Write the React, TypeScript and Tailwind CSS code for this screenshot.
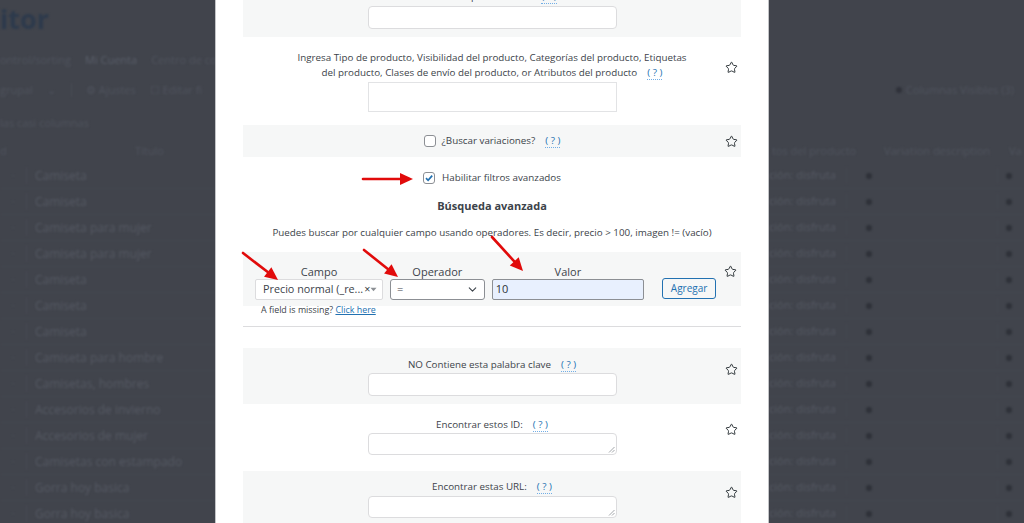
import { ChevronDown, Star } from "lucide-react";
import type { ReactNode } from "react";
import cx from "clsx";

const leftRows = [
    "Camiseta",
    "Camiseta",
    "Camiseta para mujer",
    "Camiseta para mujer",
    "Camiseta",
    "Camiseta",
    "Camiseta",
    "Camiseta para hombre",
    "Camisetas, hombres",
    "Accesorios de invierno",
    "Accesorios de mujer",
    "Camisetas con estampado",
    "Gorra hoy basica",
    "Gorra hoy basica",
];

const arrows = [
    { x1: 363, y1: 179, x2: 413, y2: 179 },
    { x1: 243, y1: 253, x2: 278, y2: 280 },
    { x1: 364, y1: 250, x2: 398, y2: 277 },
    { x1: 492, y1: 237, x2: 523, y2: 271 },
];

const Arrow = ({ x1, y1, x2, y2 }: { x1: number; y1: number; x2: number; y2: number }) => {
    const len = Math.hypot(x2 - x1, y2 - y1);
    const ux = (x2 - x1) / len;
    const uy = (y2 - y1) / len;
    const bx = x2 - ux * 13;
    const by = y2 - uy * 13;
    const px = -uy * 6;
    const py = ux * 6;
    return (
        <g>
            <line x1={x1} y1={y1} x2={bx} y2={by} stroke="#e10b0b" strokeWidth="2.6" strokeLinecap="round" />
            <polygon points={`${x2},${y2} ${bx + px},${by + py} ${bx - px},${by - py}`} fill="#e10b0b" />
        </g>
    );
};

const Help = () => (
    <span className="ml-[10px] inline-block border-b border-dotted border-[#72aee6] leading-[12px] text-[#2271b1]">
        ( ? )
    </span>
);

const StarIcon = () => <Star size={13} strokeWidth={1.8} className="text-[#2c3338]" />;

const Row = ({
    gray,
    starPad,
    noStar,
    className,
    children,
}: {
    gray?: boolean;
    starPad?: string;
    noStar?: boolean;
    className?: string;
    children: ReactNode;
}) => (
    <div className={cx("flex", gray ? "bg-[#f6f7f7]" : "bg-white")}>
        <div className="w-[20px] shrink-0" />
        <div className={cx("flex flex-1 flex-col items-center", className)}>{children}</div>
        <div className={cx("flex w-[20px] shrink-0 justify-center", starPad)}>{!noStar && <StarIcon />}</div>
    </div>
);

const TextBox = ({ h, area }: { h: string; area?: boolean }) => (
    <div className={cx("relative w-[249px] rounded-[4px] border border-[#dcdcde] bg-white", h)}>
        {area && (
            <svg className="absolute bottom-[1px] right-[1px]" width="7" height="7" viewBox="0 0 7 7">
                <path d="M6.5 1 L1 6.5 M6.5 4 L4 6.5" stroke="#8c8f94" strokeWidth="0.8" />
            </svg>
        )}
    </div>
);

const Check = ({ checked }: { checked?: boolean }) => (
    <span className="flex h-[12px] w-[12px] items-center justify-center rounded-[3px] border border-[#8c8f94] bg-white">
        {checked && (
            <svg width="10" height="10" viewBox="0 0 10 10">
                <path d="M2 5.2 L4.1 7.3 L8.2 2.6" fill="none" stroke="#2271b1" strokeWidth="1.7" />
            </svg>
        )}
    </span>
);

const Background = () => (
    <div className="whitespace-nowrap blur-[1.2px] font-['Open_Sans',sans-serif] text-[11px] text-[#50545e]">
        <div className="h-[40px] pt-[2px] text-[27px] font-bold leading-[34px] text-[#2d3a4c]">itor</div>
        <div className="mt-[12px] flex h-[16px] items-center gap-[14px]">
            <span>ontrol/sorting</span>
            <span className="text-[#5a5f6a]">Mi Cuenta</span>
            <span>Centro de columnas</span>
        </div>
        <div className="mt-[14px] flex h-[16px] items-center">
            <div className="flex w-[215px] items-center gap-[14px]">
                <span>grupal</span>
                <span className="w-[10px]">⌄</span>
                <span className="h-[14px] w-px bg-[#4a4d56]" />
                <span>⚙ Ajustes</span>
                <span>☐ Editar fi</span>
            </div>
            <div className="ml-auto flex items-center gap-[4px] pr-[10px]">
                <span className="h-[6px] w-[6px] rounded-full bg-[#2f323a]" />
                <span>Columnas Visibles (3)</span>
            </div>
        </div>
        <div className="mt-[17px] h-[16px]">las casi columnas</div>
        <div className="mt-[8px] flex h-[24px] items-center">
            <span className="w-[135px]">d</span>
            <span>Título</span>
            <span className="ml-[608px] w-[112px]">tos del producto</span>
            <span className="w-[125px]">Variation description</span>
            <span>Va</span>
        </div>
        {leftRows.map((t, i) => (
            <div key={i} className="flex h-[26px] items-center border-b border-[#454850]">
                <span className="w-[27px] border-r border-[#474a53] text-center">·</span>
                <span className="w-[188px] overflow-hidden pl-[8px] text-[12px] text-[#565a64]">{t}</span>
                <span className="ml-[554px] w-[78px] border-r border-[#464952] text-[#565a64]">ción: disfruta</span>
                <span className="w-[150px] pl-[19px]">
                    <span className="inline-block h-[6px] w-[6px] rounded-full bg-[#2e3139]" />
                </span>
                <span className="border-l border-[#464952] pl-[8px]">
                    <span className="inline-block h-[6px] w-[6px] rounded-full bg-[#2e3139]" />
                </span>
            </div>
        ))}
    </div>
);

const App = () => {
    return (
        <div className="relative h-[523px] w-[1024px] overflow-hidden bg-[#41444c]">
            <Background />

            {/* modal */}
            <div className="absolute left-[215px] top-0 h-full w-[554px] overflow-hidden border-x border-[#c3c4c7] bg-white font-['Open_Sans',sans-serif] text-[9.8px] text-[#3c434a]">
                <div className="px-[27px]">
                    <Row gray noStar className="mt-[-20px] pt-[9px] pb-[8px]">
                        <div className="h-[16px] leading-[16px]">
                            Contiene palabra clave
                            <Help />
                        </div>
                        <div className="mt-[1px]">
                            <TextBox h="h-[23px]" />
                        </div>
                    </Row>

                    <Row starPad="pt-[24px]" className="pt-[13px] pb-[13px]">
                        <div className="h-[30px] text-center leading-[15px]">
                            Ingresa Tipo de producto, Visibilidad del producto, Categorías del producto, Etiquetas
                            <br />
                            del producto, Clases de envío del producto, or Atributos del producto
                            <Help />
                        </div>
                        <div className="mt-[2px]">
                            <div className="h-[30px] w-[249px] border border-[#e2e3e5] bg-white" />
                        </div>
                    </Row>

                    <Row gray starPad="pt-[10px]" className="h-[32px]">
                        <div className="flex h-full items-center">
                            <Check />
                            <span className="ml-[6px]">¿Buscar variaciones?</span>
                            <Help />
                        </div>
                    </Row>

                    <div className="flex flex-col items-center pt-[14px]">
                        <div className="flex h-[14px] items-center">
                            <Check checked />
                            <span className="ml-[7px]">Habilitar filtros avanzados</span>
                        </div>
                        <div className="mt-[13px] h-[16px] text-[11px] font-bold leading-[16px]">Búsqueda avanzada</div>
                        <div className="mt-[12px] h-[14px] leading-[14px]">
                            Puedes buscar por cualquier campo usando operadores. Es decir, precio &gt; 100, imagen != (vacío)
                        </div>
                    </div>

                    {/* advanced filter row */}
                    <div className="mt-[12px] flex bg-[#f6f7f7] pt-[13px] pb-[6px] pl-[12px]">
                        <div className="flex w-[128px] flex-col">
                            <div className="h-[14px] text-center text-[11px] leading-[14px]">Campo</div>
                            <div className="flex h-[21px] items-center overflow-hidden whitespace-nowrap rounded-[2px] border border-[#dcdcde] bg-white pl-[7px] pr-[6px] text-[10.8px]">
                                <span>Precio normal (_re...</span>
                                <span className="ml-[1px]">×</span>
                                <svg className="ml-auto shrink-0" width="7" height="5" viewBox="0 0 7 5">
                                    <path d="M0.5 0.8 L6.5 0.8 L3.5 4.2 Z" fill="#8c8f94" />
                                </svg>
                            </div>
                        </div>
                        <div className="ml-[7px] flex w-[95px] flex-col">
                            <div className="h-[14px] text-center text-[11px] leading-[14px]">Operador</div>
                            <div className="flex h-[21px] items-center rounded-[3px] border border-[#8c8f94] bg-white pl-[6px] pr-[5px] text-[11px]">
                                <span>=</span>
                                <ChevronDown size={13} strokeWidth={2} className="ml-auto text-[#3c434a]" />
                            </div>
                        </div>
                        <div className="ml-[7px] flex w-[153px] flex-col">
                            <div className="h-[14px] text-center text-[11px] leading-[14px]">Valor</div>
                            <div className="flex h-[21px] items-center rounded-[2px] border border-[#8c8f94] bg-[#e8f0fe] pl-[3px] text-[11px] text-[#2c3338]">
                                10
                            </div>
                        </div>
                        <div className="ml-[18px] flex flex-col justify-end pb-[1px]">
                            <button className="flex h-[21px] w-[54px] items-center justify-center rounded-[3px] border border-[#2271b1] bg-[#f6f7f7] text-[10px] text-[#2271b1]">
                                Agregar
                            </button>
                        </div>
                        <div className="flex w-[25px] justify-end pr-[4px]">
                            <StarIcon />
                        </div>
                    </div>
                    <div className="mt-[-2px] h-[12px] pl-[18px] text-[8.9px] leading-[12px]">
                        A field is missing? <span className="text-[#2271b1] underline">Click here</span>
                    </div>
                    <div className="mt-[10px] border-t border-[#dcdcde]" />

                    <div className="mt-[21px]">
                        <Row gray starPad="pt-[15px]" className="pt-[9px] pb-[8px]">
                            <div className="h-[16px] leading-[16px]">
                                NO Contiene esta palabra clave
                                <Help />
                            </div>
                            <TextBox h="h-[23px]" />
                        </Row>
                    </div>

                    <Row starPad="pt-[19px]" className="pt-[14px] pb-[16px]">
                        <div className="h-[14px] leading-[14px]">
                            Encontrar estos ID:
                            <Help />
                        </div>
                        <div className="mt-[1px]">
                            <TextBox h="h-[22px]" area />
                        </div>
                    </Row>

                    <Row gray starPad="pt-[15px]" className="pt-[9px] pb-[16px]">
                        <div className="h-[14px] leading-[14px]">
                            Encontrar estas URL:
                            <Help />
                        </div>
                        <div className="mt-[2px]">
                            <TextBox h="h-[22px]" area />
                        </div>
                    </Row>
                </div>
            </div>

            {/* annotation arrows */}
            <svg className="pointer-events-none absolute inset-0" width="1024" height="523">
                {arrows.map((a, i) => (
                    <Arrow key={i} {...a} />
                ))}
            </svg>
        </div>
    );
};

export default App;
